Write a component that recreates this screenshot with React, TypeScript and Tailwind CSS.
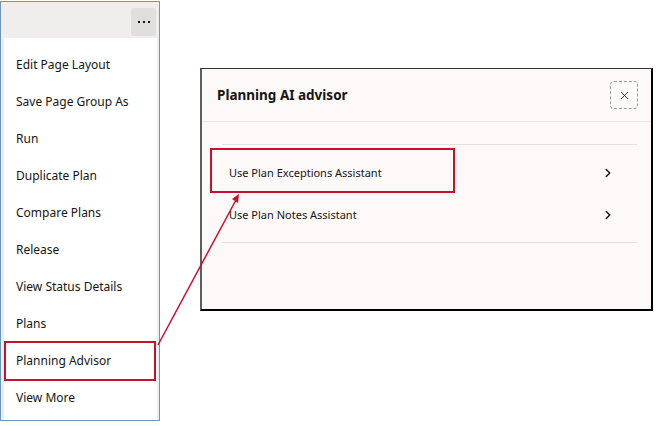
import { ChevronRight, X } from 'lucide-react';

const menuItems = [
  'Edit Page Layout',
  'Save Page Group As',
  'Run',
  'Duplicate Plan',
  'Compare Plans',
  'Release',
  'View Status Details',
  'Plans',
  'Planning Advisor',
  'View More',
];

const assistants = ['Use Plan Exceptions Assistant', 'Use Plan Notes Assistant'];

export default function App() {
  return (
    <div className="relative w-[656px] h-[426px] bg-white overflow-hidden font-['Noto_Sans',sans-serif] text-[#161513]">
      <div className="flex items-start">
        {/* Actions menu */}
        <div className="mt-[1px] w-[160px] h-[420px] border border-[#6f97b3] bg-[#efeeec] flex flex-col">
          <div className="h-[36px] flex justify-end items-start pt-[6px] pr-[3px]">
            <button className="w-[25px] h-[28px] bg-[#e0dfdd] rounded-[2px] flex items-center justify-center gap-[3px]">
              <span className="w-[2px] h-[2px] bg-[#111]" />
              <span className="w-[2px] h-[2px] bg-[#111]" />
              <span className="w-[2px] h-[2px] bg-[#111]" />
            </button>
          </div>
          <div className="ml-[3px] mr-[2px] flex-1 bg-white flex flex-col pt-[8px]">
            {menuItems.map((item) => (
              <div key={item} className="relative h-[37px] flex items-center pl-[12px] text-[12px]">
                {item}
                {item === 'Planning Advisor' && (
                  <span className="absolute -top-[1px] -bottom-[2px] left-0 right-[1px] border-2 border-[#c8102e]" />
                )}
              </div>
            ))}
          </div>
        </div>

        {/* Advisor dialog */}
        <div className="ml-[40px] mt-[68px] w-[453px] h-[243px] bg-[#fcf9f8] border-t border-t-[#333] border-l-2 border-l-[#5e5e5e] border-r-2 border-r-black border-b-2 border-b-black flex flex-col">
          <div className="h-[53px] flex items-center justify-between pl-[15px] pr-[13px] border-b border-[#ece8e5]">
            <span className="text-[13.5px] font-bold">Planning AI advisor</span>
            <button className="w-[28px] h-[28px] border border-dashed border-[#9a9794] rounded-[4px] flex items-center justify-center">
              <X size={13} strokeWidth={1.6} className="text-[#161513]" />
            </button>
          </div>
          <div className="mt-[22px] ml-[20px] mr-[14px] border-t border-b border-[#e4e0dd] pt-[7px] pb-[6px]">
            {assistants.map((a, i) => (
              <div key={a} className="relative h-[42px] flex items-center justify-between pl-[7px] pr-[22px] text-[11px]">
                <span>{a}</span>
                <ChevronRight size={14} strokeWidth={2.5} />
                {i === 0 && (
                  <span className="absolute -left-[12px] -top-[4px] w-[245px] h-[45px] border-2 border-[#c8102e]" />
                )}
              </div>
            ))}
          </div>
        </div>
      </div>

      {/* connector arrow */}
      <svg className="absolute inset-0 pointer-events-none" width="656" height="426">
        <line x1="158" y1="345" x2="236" y2="200" stroke="#c8102e" strokeWidth="1.5" />
        <polygon points="239,194 232,199 238,203" fill="#c8102e" />
      </svg>
    </div>
  );
}
